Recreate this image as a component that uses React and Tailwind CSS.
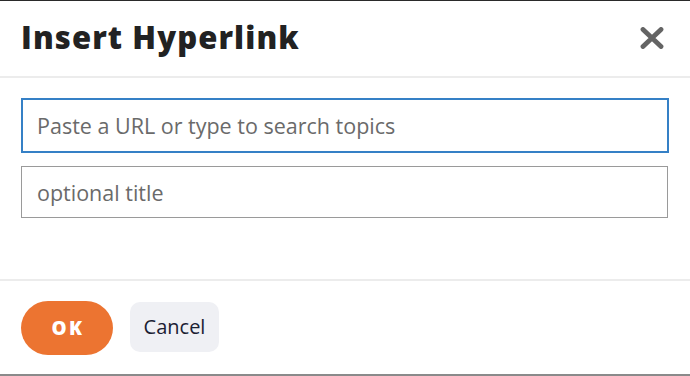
import React from "react";

export default function App() {
  return (
    <div className="w-[690px] h-[376px] bg-white flex flex-col border-t border-[#2a2a2a] border-b-2 border-b-[#8a8a8a] overflow-hidden" style={{ fontFamily: '"Open Sans", sans-serif' }}>
      <div className="h-[77px] shrink-0 flex items-center justify-between pl-[21px] pr-[26px] border-b-2 border-[#ececec]">
        <h1 className="text-[31px] font-extrabold text-[#222222] tracking-[1.1px] leading-none pb-[2px]" style={{ fontFamily: '"Open Sans", sans-serif' }}>Insert Hyperlink</h1>
        <button className="w-[24px] h-[24px] flex items-center justify-center mb-[2px]">
          <svg width="24" height="22" viewBox="0 0 24 22">
            <path d="M3 2.5 L21 19.5 M21 2.5 L3 19.5" stroke="#646464" strokeWidth="4.8" strokeLinecap="round" fill="none" />
          </svg>
        </button>
      </div>
      <div className="h-[201px] shrink-0 flex flex-col gap-[13px] pt-[20px] pl-[21px] pr-[21px]">
        <input
          className="h-[55px] w-[648px] border-2 border-[#3580c6] px-[14px] text-[21.5px] text-[#333] placeholder:text-[#6a6a6a] outline-none"
          placeholder="Paste a URL or type to search topics"
        />
        <input
          className="h-[52px] w-[647px] border border-[#9a9a9a] px-[15px] text-[21.5px] text-[#333] placeholder:text-[#6a6a6a] outline-none"
          placeholder="optional title"
        />
      </div>
      <div className="flex-1 flex items-start gap-[17px] pt-[20px] px-[21px] border-t-2 border-[#ececec]">
        <button className="w-[92px] h-[54px] rounded-full bg-[#ec7431] text-white text-[19px] font-extrabold tracking-[2.5px] pl-[2px] flex items-center justify-center">OK</button>
        <button className="w-[89px] h-[50px] mt-[1px] rounded-[10px] bg-[#eff0f4] text-[#1b2133] text-[20px] flex items-center justify-center">Cancel</button>
      </div>
    </div>
  );
}
